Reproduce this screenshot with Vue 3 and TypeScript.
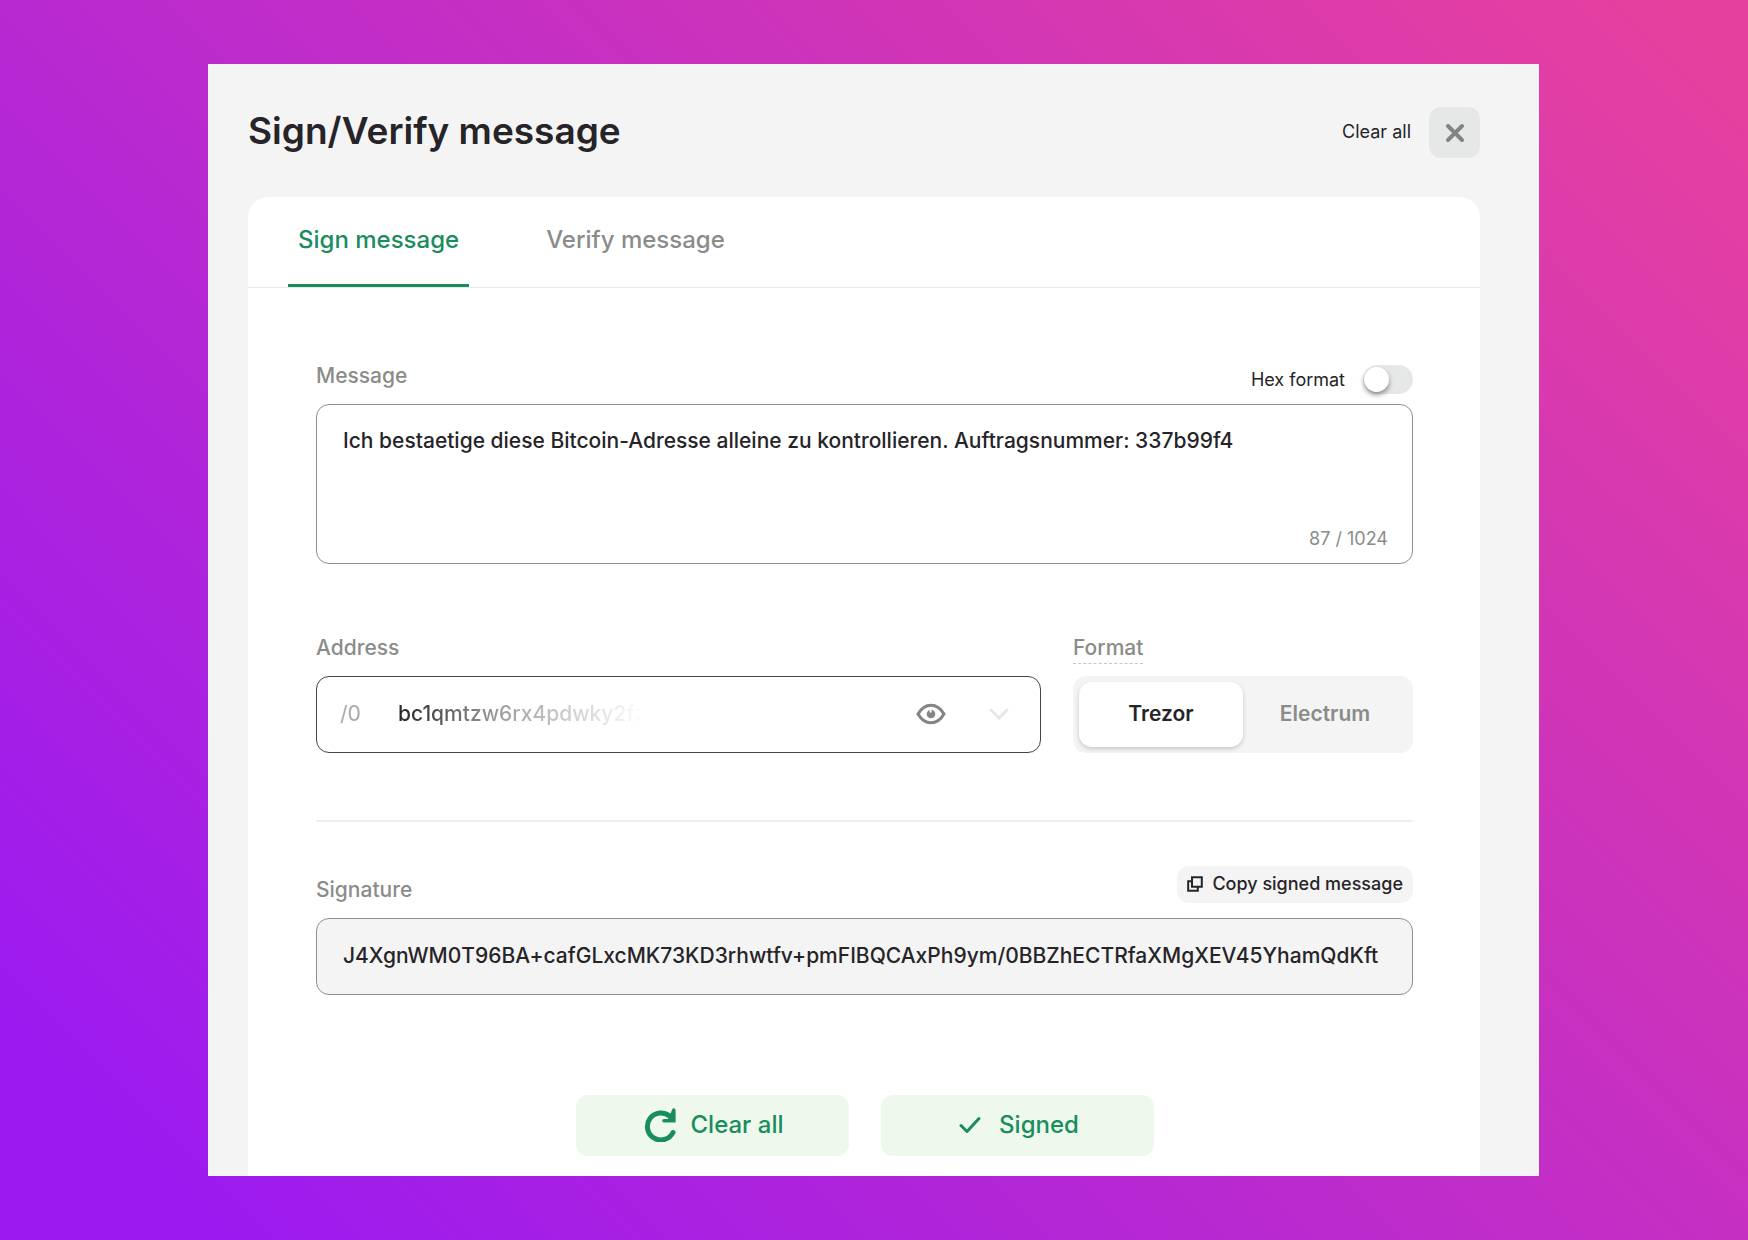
<script setup lang="ts">
import { computed, ref } from 'vue'

type Tab = 'sign' | 'verify'
type Format = 'trezor' | 'electrum'

const maxLength = 1024
const tabs: { id: Tab; label: string }[] = [
  { id: 'sign', label: 'Sign message' },
  { id: 'verify', label: 'Verify message' },
]
const formats: { id: Format; label: string }[] = [
  { id: 'trezor', label: 'Trezor' },
  { id: 'electrum', label: 'Electrum' },
]

const activeTab = ref<Tab>('sign')
const format = ref<Format>('trezor')
const hex = ref(false)
const message = ref(
  'Ich bestaetige diese Bitcoin-Adresse alleine zu kontrollieren. Auftragsnummer: 337b99f4',
)
const address = ref('bc1qmtzw6rx4pdwky2fz')
const signature = ref('J4XgnWM0T96BA+cafGLxcMK73KD3rhwtfv+pmFIBQCAxPh9ym/0BBZhECTRfaXMgXEV45YhamQdKft')
const counter = computed(() => `${message.value.length} / ${maxLength}`)

function clearAll() {
  message.value = ''
  address.value = ''
  signature.value = ''
}
</script>

<template>
  <div class="page">
    <main class="panel">
      <header class="header">
        <h1>Sign/Verify message</h1>
        <button class="link" type="button" @click="clearAll">Clear all</button>
        <button class="close" type="button" aria-label="Close">
          <svg width="20" height="20" viewBox="0 0 20 20" aria-hidden="true">
            <path d="M3 3l14 14M17 3L3 17" />
          </svg>
        </button>
      </header>

      <section class="card">
        <nav class="tabs" role="tablist">
          <button
            v-for="tab in tabs"
            :key="tab.id"
            type="button"
            role="tab"
            class="tab"
            :class="{ active: activeTab === tab.id }"
            :aria-selected="activeTab === tab.id"
            @click="activeTab = tab.id"
          >
            {{ tab.label }}
          </button>
        </nav>

        <form class="form" @submit.prevent>
          <div class="field">
            <div class="field-head">
              <label class="label" for="message">Message</label>
              <label class="switch">
                <span>Hex format</span>
                <input v-model="hex" type="checkbox" role="switch" />
              </label>
            </div>
            <div class="box message">
              <textarea id="message" v-model="message" :maxlength="maxLength" spellcheck="false"></textarea>
              <span class="counter">{{ counter }}</span>
            </div>
          </div>

          <div class="row">
            <div class="field grow">
              <div class="field-head">
                <label class="label" for="address">Address</label>
              </div>
              <div class="box address">
                <span class="path">/0</span>
                <input id="address" v-model="address" type="text" spellcheck="false" />
                <button class="icon" type="button" aria-label="Reveal address">
                  <svg class="eye" width="30" height="22" viewBox="0 0 30 22" aria-hidden="true">
                    <path
                      class="lid"
                      d="M2 11C5.500 5 10 2.200 15 2.200S24.500 5 28 11C24.500 17 20 19.800 15 19.800S5.500 17 2 11Z"
                    />
                    <circle class="pupil" cx="15" cy="11" r="4.300" />
                    <path class="glint" d="M14.600 5.500v4" />
                  </svg>
                </button>
                <button class="icon" type="button" aria-label="Choose address">
                  <svg class="chevron" width="20" height="12" viewBox="0 0 20 12" aria-hidden="true">
                    <path d="M2 2l8 8 8-8" />
                  </svg>
                </button>
              </div>
            </div>

            <div class="field format" role="group" aria-labelledby="format-label">
              <div class="field-head">
                <span id="format-label" class="label hint">Format</span>
              </div>
              <div class="segments">
                <button
                  v-for="item in formats"
                  :key="item.id"
                  type="button"
                  class="segment"
                  :class="{ active: format === item.id }"
                  :aria-pressed="format === item.id"
                  @click="format = item.id"
                >
                  {{ item.label }}
                </button>
              </div>
            </div>
          </div>

          <hr class="divider" />

          <div class="field">
            <div class="field-head tall">
              <label class="label" for="signature">Signature</label>
              <button class="copy" type="button">
                <svg width="16" height="16" viewBox="0 0 16 16" aria-hidden="true">
                  <path d="M5 1.200h9.800v9.600H5zM5 5.200H1.200v9.600h9.600v-4" />
                </svg>
                Copy signed message
              </button>
            </div>
            <div class="box signature">
              <input id="signature" v-model="signature" type="text" readonly spellcheck="false" />
            </div>
          </div>

          <div class="actions">
            <button class="action" type="button" @click="clearAll">
              <svg width="34" height="34" viewBox="0 0 34 34" aria-hidden="true">
                <path class="arc" d="M29 24.500A13.500 13.500 0 1 1 26 8.500" />
                <path class="head" d="M28 2a1.700 1.700 0 0 1 3.600 0V14.500H20a1.800 1.800 0 0 1 0-3.600h4z" />
              </svg>
              Clear all
            </button>
            <button class="action signed" type="submit">
              <svg width="22" height="18" viewBox="0 0 22 18" aria-hidden="true">
                <path class="check" d="M2 9.500l6 6L20 2.500" />
              </svg>
              Signed
            </button>
          </div>
        </form>
      </section>
    </main>
  </div>
</template>

<style>
body {
  margin: 0;
}
</style>

<style scoped>
.page,
.page * {
  box-sizing: border-box;
}

.page {
  display: flex;
  min-height: 100vh;
  padding: 64px 209px 64px 208px;
  background: linear-gradient(45deg, #9b1af0 7%, #e6409f 97%);
  font-family: 'Inter', 'Liberation Sans', sans-serif;
  color: #262428;
}

button,
input,
textarea {
  margin: 0;
  padding: 0;
  border: 0;
  background: none;
  font: inherit;
  color: inherit;
  outline: none;
}

button {
  cursor: pointer;
}

svg {
  display: block;
  flex: none;
  fill: none;
}

.panel {
  display: flex;
  flex: 1;
  flex-direction: column;
  min-width: 0;
  padding: 43px 59px 0 40px;
  background: #f4f4f4;
}

.header {
  display: flex;
  align-items: center;
  gap: 18px;
  margin-bottom: 39px;
}

h1 {
  flex: 1;
  margin: 0;
  padding-bottom: 4px;
  font-size: 37px;
  font-weight: 600;
  line-height: 46px;
}

.link {
  padding-bottom: 2px;
  font-size: 18px;
  line-height: 24px;
}

.close {
  display: grid;
  place-items: center;
  width: 51px;
  height: 51px;
  border-radius: 12px;
  background: #e6e8e7;
}

.close svg {
  stroke: #838383;
  stroke-width: 4;
  stroke-linecap: round;
}

.card {
  flex: 1;
  border-radius: 20px 20px 0 0;
  background: #fff;
}

.tabs {
  display: flex;
  gap: 67px;
  padding: 0 40px;
  border-bottom: 1px solid #e8e9e8;
}

.tab {
  height: 90px;
  padding: 0 10px 2px;
  border-bottom: 3px solid transparent;
  font-size: 24px;
  font-weight: 500;
  color: #8a8c8a;
}

.tab.active {
  border-color: #1a8d5f;
  color: #1a8d5f;
}

.form {
  display: flex;
  flex-direction: column;
  padding: 69px 67px 20px 68px;
}

.field {
  display: flex;
  flex-direction: column;
}

.grow {
  flex: 1;
  min-width: 0;
}

.field-head {
  display: flex;
  justify-content: space-between;
  height: 47px;
}

.field-head.tall {
  height: 52px;
}

.label {
  align-self: flex-end;
  margin-bottom: 14px;
  font-size: 21px;
  font-weight: 500;
  line-height: 28px;
  color: #8a8c8a;
}

.hint {
  margin-bottom: 12px;
  padding-bottom: 1px;
  border-bottom: 1px dashed #c4c6c4;
}

.switch {
  display: flex;
  align-items: center;
  align-self: flex-start;
  gap: 18px;
  height: 45px;
  font-size: 18px;
}

.switch input {
  display: flex;
  align-items: center;
  width: 50px;
  height: 29px;
  padding: 1px;
  border-radius: 15px;
  background: #e6e8e7;
  appearance: none;
}

.switch input::before {
  width: 25px;
  height: 25px;
  border-radius: 50%;
  background: #fff;
  box-shadow: 0 3px 5px rgba(0, 0, 0, 0.4);
  content: '';
}

.switch input:checked {
  justify-content: flex-end;
  background: #1a8d5f;
}

.box {
  display: flex;
  border: 1px solid #8f8f8f;
  border-radius: 13px;
  font-size: 21px;
  font-weight: 500;
  line-height: 28px;
}

.box input,
.box textarea {
  flex: 1;
  min-width: 0;
}

.message {
  flex-direction: column;
  height: 160px;
  padding: 22px 24px 12px 26px;
}

.message textarea {
  resize: none;
}

.counter {
  align-self: flex-end;
  font-size: 18px;
  font-weight: 400;
  line-height: 24px;
  color: #8a8c8a;
}

.row {
  display: flex;
  gap: 32px;
  margin-top: 65px;
}

.address {
  align-items: center;
  height: 77px;
  padding: 0 31px 2px 23px;
  border-color: #454447;
}

.path {
  width: 58px;
  font-weight: 400;
  color: #a9aaa9;
}

.address input {
  background: linear-gradient(90deg, #262428 0, #9b9d9b 100px, #f4f4f4 230px, #fff 245px);
  background-clip: text;
  color: transparent;
}

.icon {
  margin-left: 43px;
}

.eye {
  stroke-width: 3;
}

.lid {
  stroke: #848484;
}

.pupil {
  fill: #848484;
}

.glint {
  stroke: #fff;
  stroke-width: 2;
}

.chevron {
  stroke: #e6e8e7;
  stroke-width: 3;
  stroke-linecap: round;
}

.format {
  width: 31%;
}

.segments {
  display: flex;
  height: 77px;
  padding: 6px;
  border-radius: 13px;
  background: #f4f4f4;
}

.segment {
  flex: 1;
  padding-bottom: 2px;
  border-radius: 13px;
  font-size: 21px;
  font-weight: 600;
  color: #8a8c8a;
}

.segment.active {
  background: #fff;
  color: #262428;
  box-shadow: 0 2px 4px rgba(0, 0, 0, 0.18);
}

.divider {
  width: 100%;
  margin: 67px 0 44px;
  border: 0;
  border-top: 2px solid #eeefee;
}

.copy {
  display: flex;
  align-items: center;
  align-self: flex-start;
  gap: 9px;
  height: 37px;
  padding: 0 10px 2px;
  border-radius: 12px;
  background: #f4f4f4;
  font-size: 18px;
  font-weight: 500;
}

.copy svg {
  stroke: #262428;
  stroke-width: 2;
}

.signature {
  height: 77px;
  padding: 0 24px 2px 26px;
  background: #f4f4f4;
}

.actions {
  display: flex;
  justify-content: center;
  gap: 32px;
  margin-top: 100px;
}

.action {
  display: flex;
  align-items: center;
  justify-content: center;
  gap: 12px;
  width: 273px;
  height: 61px;
  padding: 0 0 2px 4px;
  border-radius: 12px;
  background: #eff8ec;
  font-size: 24px;
  font-weight: 500;
  color: #1a8d5f;
}

.signed {
  gap: 18px;
}

.arc {
  stroke: #1a8d5f;
  stroke-width: 5;
  stroke-linecap: round;
}

.head {
  fill: #1a8d5f;
}

.check {
  stroke: #1a8d5f;
  stroke-width: 3;
  stroke-linecap: round;
  stroke-linejoin: round;
}
</style>
